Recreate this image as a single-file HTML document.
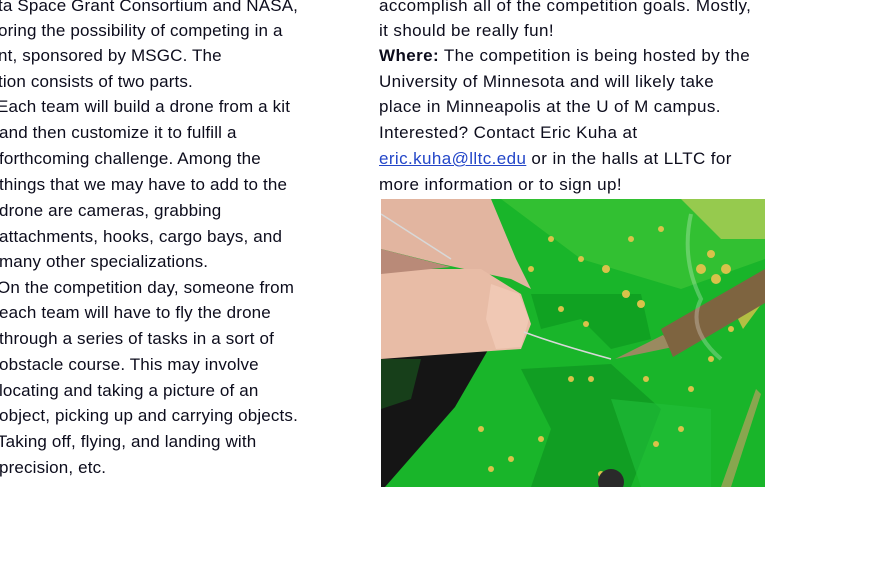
<!DOCTYPE html>
<html><head><meta charset="utf-8"><style>
html,body{margin:0;padding:0;background:#fff;width:881px;height:583px;overflow:hidden;position:relative}
.l{position:absolute;white-space:nowrap;font-family:"Liberation Sans",sans-serif;font-size:17px;color:#0c0c1c;letter-spacing:0.15px;line-height:20px}
.r{letter-spacing:0.4px}
a{color:#2346c8;text-decoration:underline}
</style></head><body>
<div class="l" style="left:-2px;top:-4px">ta Space Grant Consortium and NASA,</div>
<div class="l" style="left:-2px;top:21px">oring the possibility of competing in a</div>
<div class="l" style="left:-2px;top:46px">nt, sponsored by MSGC. The</div>
<div class="l" style="left:-2px;top:72px">tion consists of two parts.</div>
<div class="l" style="left:-3px;top:97px">Each team will build a drone from a kit</div>
<div class="l" style="left:-1px;top:123px">and then customize it to fulfill a</div>
<div class="l" style="left:-1px;top:149px">forthcoming challenge. Among the</div>
<div class="l" style="left:-1px;top:175px">things that we may have to add to the</div>
<div class="l" style="left:-1px;top:201px">drone are cameras, grabbing</div>
<div class="l" style="left:-1px;top:227px">attachments, hooks, cargo bays, and</div>
<div class="l" style="left:-1px;top:252px">many other specializations.</div>
<div class="l" style="left:-3px;top:278px">On the competition day, someone from</div>
<div class="l" style="left:-1px;top:303px">each team will have to fly the drone</div>
<div class="l" style="left:-1px;top:329px">through a series of tasks in a sort of</div>
<div class="l" style="left:-1px;top:355px">obstacle course. This may involve</div>
<div class="l" style="left:-1px;top:381px">locating and taking a picture of an</div>
<div class="l" style="left:-1px;top:406px">object, picking up and carrying objects.</div>
<div class="l" style="left:-3px;top:432px">Taking off, flying, and landing with</div>
<div class="l" style="left:-1px;top:458px">precision, etc.</div>

<div class="l r" style="left:379px;top:-4px">accomplish all of the competition goals. Mostly,</div>
<div class="l r" style="left:379px;top:21px">it should be really fun!</div>
<div class="l r" style="left:379px;top:46px"><b>Where:</b> The competition is being hosted by the</div>
<div class="l r" style="left:379px;top:72px">University of Minnesota and will likely take</div>
<div class="l r" style="left:379px;top:97px">place in Minneapolis at the U of M campus.</div>
<div class="l r" style="left:379px;top:123px">Interested? Contact Eric Kuha at</div>
<div class="l r" style="left:379px;top:149px"><a>eric.kuha@lltc.edu</a> or in the halls at LLTC for</div>
<div class="l r" style="left:379px;top:175px">more information or to sign up!</div>

<svg style="position:absolute;left:381px;top:199px" width="384" height="288" viewBox="0 0 384 288">
<rect width="384" height="288" fill="#19b52a"/>
<path d="M120 0 L384 0 L384 60 L300 90 L200 60 Z" fill="#4ccb3a" opacity=".5"/>
<path d="M150 95 L260 95 L270 140 L230 150 L200 120 L160 130Z" fill="#0d9a20" opacity=".7"/>
<path d="M140 170 L230 165 L280 210 L250 288 L150 288 L170 230Z" fill="#0b9020" opacity=".6"/>
<path d="M230 200 L330 210 L330 288 L260 288Z" fill="#22c03a" opacity=".6"/>
<path d="M300 0 L384 0 L384 40 L340 40Z" fill="#d8d060" opacity=".6"/>
<g fill="#d9c24a">
<circle cx="200" cy="60" r="3"/><circle cx="225" cy="70" r="4"/><circle cx="245" cy="95" r="4"/><circle cx="260" cy="105" r="4"/>
<circle cx="180" cy="110" r="3"/><circle cx="205" cy="125" r="3"/><circle cx="150" cy="70" r="3"/><circle cx="170" cy="40" r="3"/>
<circle cx="320" cy="70" r="5"/><circle cx="335" cy="80" r="5"/><circle cx="345" cy="70" r="5"/><circle cx="330" cy="55" r="4"/>
<circle cx="210" cy="180" r="3"/><circle cx="265" cy="180" r="3"/><circle cx="310" cy="190" r="3"/><circle cx="330" cy="160" r="3"/>
<circle cx="300" cy="230" r="3"/><circle cx="275" cy="245" r="3"/><circle cx="130" cy="260" r="3"/><circle cx="160" cy="240" r="3"/>
<circle cx="100" cy="230" r="3"/><circle cx="110" cy="270" r="3"/><circle cx="220" cy="275" r="3"/><circle cx="190" cy="180" r="3"/>
<circle cx="350" cy="130" r="3"/><circle cx="360" cy="110" r="3"/><circle cx="250" cy="40" r="3"/><circle cx="280" cy="30" r="3"/>
</g>
<path d="M357 120 L384 80 L384 100 L362 130Z" fill="#d9c24a" opacity=".8"/>
<path d="M340 288 L375 190 L380 195 L350 288Z" fill="#b8a060" opacity=".7"/>
<path d="M0 154 L107 151 L74 208 L4 288 L0 288Z" fill="#151515"/>
<path d="M0 160 L40 160 L30 200 L0 210Z" fill="#1a6a20" opacity=".5"/>
<circle cx="230" cy="283" r="13" fill="#2a2a2a"/>
<path d="M0 0 L110 0 L135 60 L150 90 L130 80 L60 65 L0 50Z" fill="#e2b5a0"/>
<path d="M0 70 L100 70 L140 95 L150 125 L140 150 L110 152 L40 157 L0 160Z" fill="#e8bca6"/>
<path d="M110 85 L138 95 L148 120 L140 148 L115 150 L105 120Z" fill="#f0c8b4"/>
<path d="M0 50 L70 68 L0 75Z" fill="#b98a78"/>
<path d="M0 15 L70 60 M143 133 Q175 145 230 160" stroke="#d8d8d8" stroke-width="1.5" fill="none"/>
<path d="M234 160 L282 136 L292 148 Z" fill="#9a8a60"/>
<path d="M280 130 L384 70 L384 104 L292 158 Z" fill="#7e6440"/>
<path d="M310 15 Q300 60 320 100 Q305 130 340 160" stroke="#fff" stroke-width="4" fill="none" opacity=".25"/>
</svg>
</body></html>
